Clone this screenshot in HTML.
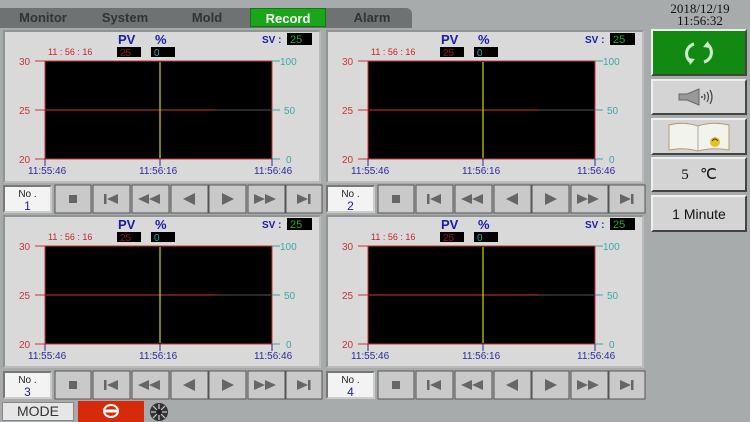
<!DOCTYPE html>
<html><head><meta charset="utf-8"><style>
*{margin:0;padding:0;box-sizing:border-box}
body{width:750px;height:422px;background:#a7abab;position:relative;overflow:hidden;font-family:"Liberation Sans",sans-serif}
.a{position:absolute}
.tabs{left:0;top:8px;width:412px;height:20px;background:#6f7272;border-radius:0 6px 0 0}
.tab{top:8px;height:20px;font-size:13px;font-weight:bold;color:#333;text-align:center;line-height:20px}
.rec{left:250px;top:8px;width:76px;height:19px;background:#1aa51a;color:#fff;font-size:13px;font-weight:bold;text-align:center;line-height:19px;border:1px solid #0c7a0c}
.date{left:650px;top:3px;width:100px;font-family:"Liberation Serif",serif;font-size:13px;line-height:12px;text-align:center;color:#111}
.pan{width:318px;height:153px;background:#d9d9d9;border:2px solid #8f9393;border-right-color:#bbb;border-bottom-color:#bbb}
.no{height:28px;background:#f3f3f3;border:2px solid;border-color:#777 #ccc #ccc #777;font-size:10px;text-align:center;line-height:11px;color:#222;padding-top:2px}
.no b{display:block;color:#1b1ba8;font-weight:normal;font-size:12px;margin-top:1px}
.rbt{left:651px;width:96px;background:#d4d4d4;border:2px solid;border-color:#eee #444 #444 #eee;display:flex;align-items:center;justify-content:center;font-size:13px;color:#111}
</style></head><body>
<div class="a tabs"></div>
<div class="a tab" style="left:8px;width:70px">Monitor</div>
<div class="a tab" style="left:90px;width:70px">System</div>
<div class="a tab" style="left:172px;width:70px">Mold</div>
<div class="a rec">Record</div>
<div class="a tab" style="left:337px;width:70px">Alarm</div>
<div class="a date">2018/12/19<br>11:56:32</div>

<div class="a pan" style="left:3px;top:30px"></div>
<div class="a pan" style="left:326px;top:30px"></div>
<div class="a pan" style="left:3px;top:215px"></div>
<div class="a pan" style="left:326px;top:215px"></div>

<svg class="a" style="left:0;top:0" width="750" height="422">
<defs>
<g id="pp" font-family="Liberation Sans,sans-serif">
<text x="115" y="14" font-size="13" font-weight="bold" fill="#1b1ba8">PV</text>
<text x="152" y="14" font-size="13" font-weight="bold" fill="#1b1ba8">%</text>
<text x="259" y="13" font-size="10" font-weight="bold" fill="#1b1ba8">SV :</text>
<rect x="284" y="3" width="25" height="12" fill="#000"/>
<text x="287" y="13" font-size="11" fill="#22aa22">25</text>
<text x="45" y="25" font-size="9" fill="#c22">11 : 56 : 16</text>
<rect x="114" y="17" width="24" height="10" fill="#000"/>
<text x="117" y="26" font-size="10" fill="#a01010">25</text>
<rect x="148" y="17" width="24" height="10" fill="#000"/>
<text x="151" y="26" font-size="10" fill="#2aa">0</text>
<rect x="42" y="31" width="227" height="98" fill="#000" stroke="#c33" stroke-width="1"/>
<line x1="32" y1="31" x2="42" y2="31" stroke="#c33"/>
<line x1="32" y1="80" x2="42" y2="80" stroke="#c33"/>
<line x1="32" y1="129" x2="42" y2="129" stroke="#c33"/>
<text x="16" y="35" font-size="10" fill="#c33">30</text>
<text x="16" y="84" font-size="10" fill="#c33">25</text>
<text x="16" y="133" font-size="10" fill="#c33">20</text>
<line x1="269" y1="31" x2="277" y2="31" stroke="#3aa8a8"/>
<line x1="269" y1="80" x2="277" y2="80" stroke="#3aa8a8"/>
<line x1="269" y1="129" x2="277" y2="129" stroke="#3aa8a8"/>
<text x="277" y="35" font-size="10" fill="#3aa8a8">100</text>
<text x="281" y="84" font-size="10" fill="#3aa8a8">50</text>
<text x="283" y="133" font-size="10" fill="#3aa8a8">0</text>
<line x1="43" y1="80" x2="212" y2="80" stroke="#c33"/>
<line x1="212" y1="80" x2="268" y2="80" stroke="#555"/>
<line x1="157" y1="32" x2="157" y2="128" stroke="#ff0"/>
<line x1="42" y1="129" x2="42" y2="136" stroke="#2a2a9a"/>
<line x1="157" y1="129" x2="157" y2="136" stroke="#2a2a9a"/>
<line x1="269" y1="129" x2="269" y2="136" stroke="#2a2a9a"/>
<text x="25" y="144" font-size="10" fill="#2a2a9a">11:55:46</text>
<text x="136" y="144" font-size="10" fill="#2a2a9a">11:56:16</text>
<text x="251" y="144" font-size="10" fill="#2a2a9a">11:56:46</text>
</g>
</defs>
<use href="#pp" x="3" y="30"/>
<use href="#pp" x="326" y="30"/>
<use href="#pp" x="3" y="215"/>
<use href="#pp" x="326" y="215"/>
</svg>

<div class="a" style="left:0;top:184px;width:648px;height:30px">
<div class="a no" style="left:3px;top:1px;width:49px">No .<b>1</b></div>
<div class="a no" style="left:326px;top:1px;width:49px">No .<b>2</b></div>
</div>
<div class="a" style="left:0;top:370px;width:648px;height:30px">
<div class="a no" style="left:3px;top:1px;width:49px">No .<b>3</b></div>
<div class="a no" style="left:326px;top:1px;width:49px">No .<b>4</b></div>
</div>
<svg class="a" style="left:0;top:0" width="750" height="422">
<defs>
<g id="br">
<rect x="55" y="0" width="36" height="28" fill="#c9c9c9" stroke="#555"/>
<rect x="93" y="0" width="37" height="28" fill="#c9c9c9" stroke="#555"/>
<rect x="132" y="0" width="37" height="28" fill="#c9c9c9" stroke="#555"/>
<rect x="171" y="0" width="37" height="28" fill="#c9c9c9" stroke="#555"/>
<rect x="209" y="0" width="37" height="28" fill="#c9c9c9" stroke="#555"/>
<rect x="248" y="0" width="37" height="28" fill="#c9c9c9" stroke="#555"/>
<rect x="286" y="0" width="36" height="28" fill="#c9c9c9" stroke="#555"/>
<g fill="#666">
<rect x="69" y="10" width="8" height="8"/>
<rect x="104" y="9" width="2.5" height="10"/><path d="M107 14L118 9V19Z"/>
<path d="M138 14L149 9V19Z M149 14L160 9V19Z"/>
<path d="M183 14L195 8V20Z"/>
<path d="M222 8L234 14L222 20Z"/>
<path d="M254 9L265 14L254 19Z M265 9L276 14L265 19Z"/>
<path d="M297 9L308 14L297 19Z"/><rect x="308" y="9" width="2.5" height="10"/>
</g>
</g>
</defs>
<use href="#br" x="0" y="185"/>
<use href="#br" x="323" y="185"/>
<use href="#br" x="0" y="371"/>
<use href="#br" x="323" y="371"/>
</svg>

<div class="a" style="left:2px;top:402px;width:72px;height:19px;background:#e6e6e6;border:1px solid #888;font-size:14px;text-align:center;line-height:17px;color:#333">MODE</div>
<div class="a" style="left:78px;top:401px;width:66px;height:21px;background:#d62a0a"></div>
<svg class="a" style="left:100px;top:403px" width="22" height="16"><ellipse cx="11" cy="8" rx="8" ry="7" fill="#fff"/><ellipse cx="11" cy="8" rx="6" ry="5" fill="#d62a0a"/><rect x="5" y="6.5" width="12" height="3" fill="#fff"/></svg>
<svg class="a" style="left:147px;top:402px" width="24" height="20"><circle cx="12" cy="10" r="9" fill="#333"/><g stroke="#ccc" stroke-width="1.2"><line x1="12" y1="2" x2="12" y2="18"/><line x1="4" y1="10" x2="20" y2="10"/><line x1="6" y1="4" x2="18" y2="16"/><line x1="18" y1="4" x2="6" y2="16"/></g><circle cx="12" cy="10" r="3" fill="#222"/></svg>

<div class="a rbt" style="top:29px;height:47px;background:#128a12"><svg width="40" height="30"><g fill="none" stroke="#cfe8cf" stroke-width="3"><path d="M15 6A10 10 0 0 0 12 24"/><path d="M25 24A10 10 0 0 0 28 6"/></g><path d="M11 27L9 20L16 21Z M29 3L31 10L24 9Z" fill="#cfe8cf"/></svg></div>
<div class="a rbt" style="top:79px;height:36px"><svg width="44" height="22"><path d="M2 8H10L22 3V19L10 14H2Z" fill="#999" stroke="#666"/><g fill="none" stroke="#444" stroke-width="1.2"><path d="M27 8Q29 11 27 14"/><path d="M30 6Q33 11 30 16"/><path d="M33 4Q37 11 33 18"/></g><circle cx="25" cy="11" r="1" fill="#444"/></svg></div>
<div class="a rbt" style="top:118px;height:37px"><svg width="64" height="32"><path d="M2 4Q16 0 31 5Q46 0 62 4V29Q46 26 31 30Q16 26 2 29Z" fill="#f3f3ee" stroke="#b89870"/><line x1="31" y1="5" x2="31" y2="30" stroke="#aaa"/><circle cx="48" cy="21" r="5" fill="#e6c020"/><path d="M45 20Q48 16 51 20" stroke="#333" fill="none"/></svg></div>
<div class="a rbt" style="top:157px;height:35px;font-family:'Liberation Serif',serif;font-size:15px">5&nbsp;&nbsp;&nbsp;℃</div>
<div class="a rbt" style="top:195px;height:37px;font-size:14px">1 Minute</div>
</body></html>
